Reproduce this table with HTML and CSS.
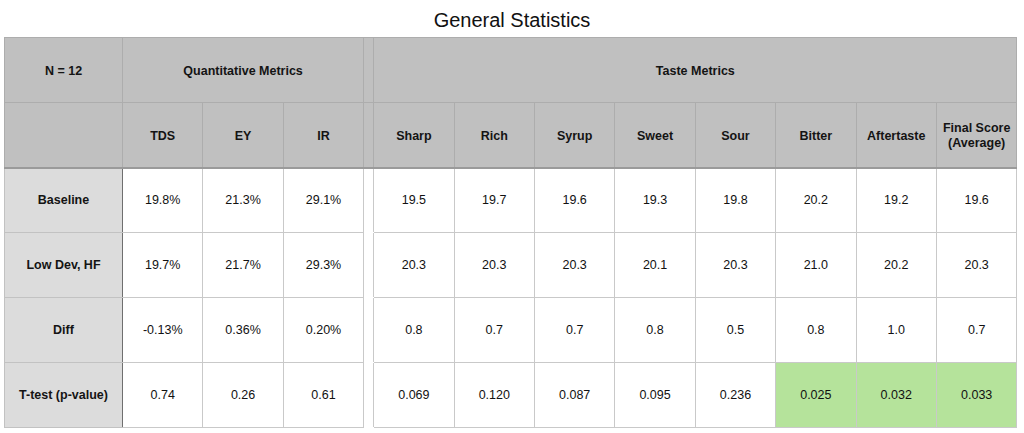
FILE: index.html
```html
<!DOCTYPE html>
<html>
<head>
<meta charset="utf-8">
<link rel="stylesheet" href="styles.css">
</head>
<body>
<div class="title">General Statistics</div>
<table class="stats">
  <colgroup>
    <col class="c-label">
    <col class="c-data"><col class="c-data"><col class="c-data">
    <col class="c-gap">
    <col class="c-data"><col class="c-data"><col class="c-data"><col class="c-data">
    <col class="c-data"><col class="c-data"><col class="c-data"><col class="c-data">
  </colgroup>
  <thead>
    <tr>
      <th class="lead">N = 12</th>
      <th colspan="3">Quantitative Metrics</th>
      <th class="gap"></th>
      <th colspan="8">Taste Metrics</th>
    </tr>
    <tr class="sub">
      <th class="lead"></th>
      <th>TDS</th><th>EY</th><th>IR</th>
      <th class="gap"></th>
      <th>Sharp</th><th>Rich</th><th>Syrup</th><th>Sweet</th><th>Sour</th><th>Bitter</th><th>Aftertaste</th><th>Final Score<br>(Average)</th>
    </tr>
  </thead>
  <tbody>
    <tr>
      <th class="row">Baseline</th>
      <td>19.8%</td><td>21.3%</td><td>29.1%</td>
      <td class="gap"></td>
      <td>19.5</td><td>19.7</td><td>19.6</td><td>19.3</td><td>19.8</td><td>20.2</td><td>19.2</td><td>19.6</td>
    </tr>
    <tr>
      <th class="row">Low Dev, HF</th>
      <td>19.7%</td><td>21.7%</td><td>29.3%</td>
      <td class="gap"></td>
      <td>20.3</td><td>20.3</td><td>20.3</td><td>20.1</td><td>20.3</td><td>21.0</td><td>20.2</td><td>20.3</td>
    </tr>
    <tr>
      <th class="row">Diff</th>
      <td>-0.13%</td><td>0.36%</td><td>0.20%</td>
      <td class="gap"></td>
      <td>0.8</td><td>0.7</td><td>0.7</td><td>0.8</td><td>0.5</td><td>0.8</td><td>1.0</td><td>0.7</td>
    </tr>
    <tr>
      <th class="row">T-test (p-value)</th>
      <td>0.74</td><td>0.26</td><td>0.61</td>
      <td class="gap"></td>
      <td>0.069</td><td>0.120</td><td>0.087</td><td>0.095</td><td>0.236</td><td class="sig">0.025</td><td class="sig">0.032</td><td class="sig">0.033</td>
    </tr>
  </tbody>
</table>
</body>
</html>
```
FILE: styles.css
```css
html, body {
  margin: 0;
  padding: 0;
  background: #ffffff;
}

body {
  font-family: "Liberation Sans", Arial, Helvetica, sans-serif;
  color: #111111;
}

.title {
  height: 35px;
  padding-top: 2px;
  line-height: 37px;
  font-size: 20px;
  text-align: center;
  color: #111111;
}

.stats {
  margin-left: 4px;
  width: 1012px;
  border-collapse: collapse;
  table-layout: fixed;
  font-size: 12.5px;
}

.c-label { width: 118px; }
.c-gap { width: 10px; }
.c-data { width: 80.4px; }

.stats tr {
  height: 65px;
}

.stats th,
.stats td {
  padding: 1px 0 0 0;
  text-align: center;
  vertical-align: middle;
  line-height: 15px;
}

.stats thead th {
  background: #c0c0c0;
  border: 1px solid #adadad;
  font-weight: bold;
  color: #141414;
  padding-top: 3px;
}

.stats thead tr.sub th {
  border-bottom: 2px solid #9a9a9a;
}

.stats tbody td {
  border: 1px solid #c9c9c9;
  background: #ffffff;
  color: #111111;
}

.stats tbody th.row {
  background: #dcdcdc;
  border: 1px solid #c2c2c2;
  border-right: 1px solid #6f6f6f;
  font-weight: bold;
  color: #141414;
}

.stats tbody td.gap {
  background: #ffffff;
  border-top-color: #ffffff;
  border-bottom-color: #ffffff;
}

.stats tbody td.sig {
  background: #b5e39b;
}
```
